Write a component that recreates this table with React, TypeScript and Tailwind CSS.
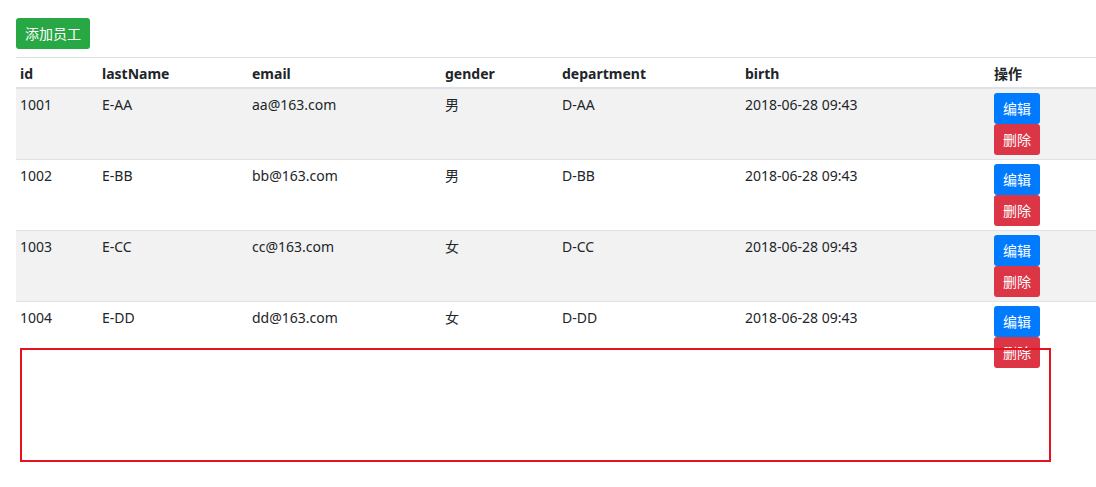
import React from "react"

const rows = [
  { id: 1001, lastName: "E-AA", email: "aa@163.com", gender: "男", dept: "D-AA", birth: "2018-06-28 09:43" },
  { id: 1002, lastName: "E-BB", email: "bb@163.com", gender: "男", dept: "D-BB", birth: "2018-06-28 09:43" },
  { id: 1003, lastName: "E-CC", email: "cc@163.com", gender: "女", dept: "D-CC", birth: "2018-06-28 09:43" },
  { id: 1004, lastName: "E-DD", email: "dd@163.com", gender: "女", dept: "D-DD", birth: "2018-06-28 09:43" },
]

const font = { fontFamily: '"Noto Sans", "Noto Sans CJK SC", sans-serif' }

export default function App() {
  return (
    <div className="relative w-[1096px] h-[487px] bg-white text-[14px] text-[#212529] overflow-hidden" style={font}>
      <div className="pl-4 pt-[18px]">
        <button className="h-[31px] px-[9px] rounded-[3px] bg-[#28a745] text-white text-[14px] leading-[21px]">
          添加员工
        </button>
      </div>

      <table className="mt-2 ml-4 w-[1080px] border-collapse table-fixed">
        <colgroup>
          <col className="w-[82px]" />
          <col className="w-[150px]" />
          <col className="w-[193px]" />
          <col className="w-[117px]" />
          <col className="w-[183px]" />
          <col className="w-[249px]" />
          <col />
        </colgroup>
        <thead>
          <tr className="border-t border-[#dee2e6] border-b-2">
            {["id", "lastName", "email", "gender", "department", "birth", "操作"].map((h) => (
              <th key={h} className="text-left font-bold px-[4px] pt-[6px] pb-[3px] leading-[20px]">
                {h}
              </th>
            ))}
          </tr>
        </thead>
        <tbody>
          {rows.map((r, i) => (
            <tr key={r.id} className={`border-t border-[#dee2e6] ${i % 2 === 0 ? "bg-[#f2f2f2]" : "bg-white"}`}>
              <td className="align-top px-[4px] pt-[5px] leading-[21px]">{r.id}</td>
              <td className="align-top px-[4px] pt-[5px] leading-[21px]">{r.lastName}</td>
              <td className="align-top px-[4px] pt-[5px] leading-[21px]">{r.email}</td>
              <td className="align-top px-[4px] pt-[5px] leading-[21px]">{r.gender}</td>
              <td className="align-top px-[4px] pt-[5px] leading-[21px]">{r.dept}</td>
              <td className="align-top px-[4px] pt-[5px] leading-[21px]">{r.birth}</td>
              <td className="align-top px-[4px] pt-[4px] pb-[4px]">
                <div className="flex flex-col items-start">
                  <button className="h-[31px] w-[46px] rounded-[3px] bg-[#007bff] text-white leading-[21px]">编辑</button>
                  <button className="h-[31px] w-[46px] rounded-[3px] bg-[#dc3545] text-white leading-[21px]">删除</button>
                </div>
              </td>
            </tr>
          ))}
        </tbody>
      </table>

      {/* annotation box drawn over the page */}
      <div className="absolute left-[20px] top-[348px] w-[1031px] h-[114px] border-2 border-[#e8121f]" />
    </div>
  )
}
